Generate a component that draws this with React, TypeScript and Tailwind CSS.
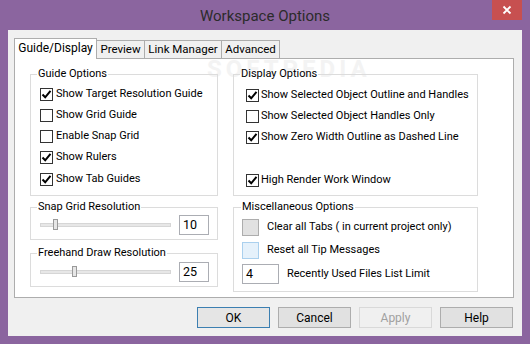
import React from "react";

const font = { fontFamily: 'Roboto, "Liberation Sans", Arial, sans-serif' };

function Check({ checked }: { checked: boolean }) {
  return (
    <span className="w-[13px] h-[13px] border border-[#333333] bg-white flex items-center justify-center shrink-0">
      {checked && (
        <svg width="11" height="11" viewBox="0 0 11 11">
          <path d="M1.5 5.5 L4.2 8.3 L9.5 1.8" fill="none" stroke="#000" strokeWidth="2" />
        </svg>
      )}
    </span>
  );
}

function CheckRow({ checked, label, gap }: { checked: boolean; label: string; gap: string }) {
  return (
    <div className={`h-[21px] flex items-center whitespace-nowrap ${gap}`}>
      <Check checked={checked} />
      <span>{label}</span>
    </div>
  );
}

function Slider({ pos }: { pos: number }) {
  return (
    <div className="relative w-[131px] h-[20px] flex items-center">
      <div className="w-full h-[4px] bg-[#e7e7e7] border border-[#d6d6d6]" />
      <div
        className="absolute top-[4px] w-[5px] h-[11px] bg-[#e6e6e6] border border-[#9a9a9a]"
        style={{ left: pos }}
      />
    </div>
  );
}

function TextBox({ value, w }: { value: string; w: string }) {
  return (
    <div className={`${w} h-[20px] border border-[#abadb3] bg-white flex items-center pl-[3px] text-[12.5px]`}>
      {value}
    </div>
  );
}

function Btn({ label, variant }: { label: string; variant?: "default" | "disabled" }) {
  const cls =
    variant === "default"
      ? "border-[#3c7fb1] bg-[#e5e5e5] text-black"
      : variant === "disabled"
      ? "border-[#d9d9d9] bg-[#f0f0f0] text-[#a0a0a0]"
      : "border-[#adadad] bg-[#e1e1e1] text-black";
  return (
    <div className={`w-[73px] h-[21px] border ${cls} flex items-center justify-center`}>
      {label}
    </div>
  );
}

export default function App() {
  return (
    <div className="w-[530px] h-[344px] bg-[#8b659f] flex flex-col text-[11px] text-black" style={font}>
      {/* Title bar */}
      <div className="h-[30px] flex items-start relative">
        <div className="flex-1 text-center pt-[5px] text-[15px] text-[#2b2b2b]">
          Workspace Options
        </div>
        <div className="absolute right-[8px] top-0 w-[30px] h-[20px] bg-[#c75050] flex items-center justify-center">
          <svg width="10" height="10" viewBox="0 0 10 10">
            <path d="M1.5 1.5 L8.5 8.5 M8.5 1.5 L1.5 8.5" stroke="#fff" strokeWidth="1.8" />
          </svg>
        </div>
      </div>

      {/* Client */}
      <div className="flex-1 mx-[8px] mb-[8px] bg-[#f0f0f0] flex flex-col pl-[6px] pr-[8px] pt-[8px]">
        {/* Tabs */}
        <div className="flex items-end h-[20px] relative z-10 whitespace-nowrap text-[11.5px]">
          <div className="w-[83px] h-[21px] bg-white border border-b-0 border-[#adadad] flex items-center justify-center pb-[2px] text-[12px] -mb-px">
            Guide/Display
          </div>
          <div className="w-[48px] h-[18px] bg-[#f0f0f0] border border-l-0 border-b-0 border-[#adadad] flex items-center justify-center">
            Preview
          </div>
          <div className="w-[77px] h-[18px] bg-[#f0f0f0] border border-l-0 border-b-0 border-[#adadad] flex items-center justify-center">
            Link Manager
          </div>
          <div className="w-[58px] h-[18px] bg-[#f0f0f0] border border-l-0 border-b-0 border-[#adadad] flex items-center justify-center">
            Advanced
          </div>
        </div>

        {/* Panel */}
        <div className="h-[240px] bg-white border border-[#adadad] flex pl-[15px] pt-[8px] gap-[15px] relative">
          {/* watermark */}
          <div className="absolute left-[192px] top-[-8px] text-[24px] tracking-[4px] text-[#f3f3f3] font-bold pointer-events-none select-none">
            SOFTPEDIA
          </div>

          {/* Left column */}
          <div className="w-[188px] flex flex-col relative">
            <fieldset className="border border-[#dcdcdc] pl-[9px] pt-[3px] pb-[5px]">
              <legend className="-ml-[3px] px-[1px] leading-[14px]">Guide Options</legend>
              <CheckRow checked label="Show Target Resolution Guide" gap="gap-[3px]" />
              <CheckRow checked={false} label="Show Grid Guide" gap="gap-[3px]" />
              <CheckRow checked={false} label="Enable Snap Grid" gap="gap-[3px]" />
              <CheckRow checked label="Show Rulers" gap="gap-[3px]" />
              <div className="h-[22px] flex items-center whitespace-nowrap gap-[3px]">
                <Check checked />
                <span>Show Tab Guides</span>
              </div>
            </fieldset>

            <fieldset className="mt-[4px] border border-[#dcdcdc] pl-[9px] pt-[1px] pb-[4px] whitespace-nowrap">
              <legend className="-ml-[3px] px-[1px] leading-[14px]">Snap Grid Resolution</legend>
              <div className="flex items-center gap-[8px]">
                <Slider pos={13} />
                <TextBox value="10" w="w-[30px]" />
              </div>
            </fieldset>

            <fieldset className="mt-[6px] border border-[#dcdcdc] pl-[9px] pt-[2px] pb-[4px] whitespace-nowrap">
              <legend className="-ml-[3px] px-[1px] leading-[14px]">Freehand Draw Resolution</legend>
              <div className="flex items-center gap-[8px]">
                <Slider pos={32} />
                <TextBox value="25" w="w-[30px]" />
              </div>
            </fieldset>
          </div>

          {/* Right column */}
          <div className="w-[245px] flex flex-col relative whitespace-nowrap">
            <fieldset className="border border-[#dcdcdc] pl-[12px] pt-[4px] pb-[4px]">
              <legend className="-ml-[6px] px-[1px] leading-[14px] mt-[1px]">Display Options</legend>
              <CheckRow checked label="Show Selected Object Outline and Handles" gap="gap-[2px]" />
              <CheckRow checked={false} label="Show Selected Object Handles Only" gap="gap-[2px]" />
              <CheckRow checked label="Show Zero Width Outline as Dashed Line" gap="gap-[2px]" />
              <div className="h-[22px]" />
              <CheckRow checked label="High Render Work Window" gap="gap-[2px]" />
            </fieldset>

            <fieldset className="mt-[4px] border border-[#dcdcdc] pl-[8px] pt-[2px] pb-[5px]">
              <legend className="-ml-[1px] px-[1px] leading-[14px]">Miscellaneous Options</legend>
              <div className="h-[23px] flex items-center gap-[8px]">
                <div className="w-[17px] h-[17px] bg-[#e1e1e1] border border-[#adadad]" />
                <span>Clear all Tabs ( in current project only)</span>
              </div>
              <div className="h-[23px] flex items-center gap-[8px]">
                <div className="w-[17px] h-[17px] bg-[#e5f1fb] border border-[#aad0ee]" />
                <span>Reset all Tip Messages</span>
              </div>
              <div className="h-[24px] flex items-center gap-[8px]">
                <TextBox value="4" w="w-[37px]" />
                <span>Recently Used Files List Limit</span>
              </div>
            </fieldset>
          </div>
        </div>

        {/* Buttons */}
        <div className="flex justify-end gap-[8px] mt-[9px] pr-px text-[12px]">
          <Btn label="OK" variant="default" />
          <Btn label="Cancel" />
          <Btn label="Apply" variant="disabled" />
          <Btn label="Help" />
        </div>
      </div>
    </div>
  );
}
